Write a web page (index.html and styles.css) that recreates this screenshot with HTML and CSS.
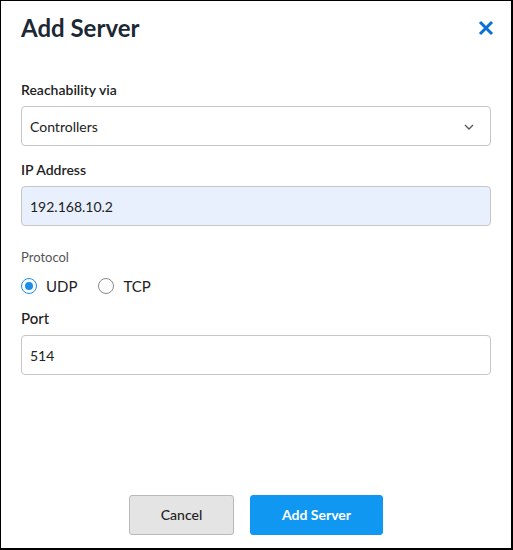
FILE: index.html
```html
<!DOCTYPE html>
<html>
<head>
<meta charset="utf-8">
<link rel="stylesheet" href="styles.css">
</head>
<body>
<div class="dialog">
  <div class="header">
    <h1 class="title">Add Server</h1>
    <button class="close" aria-label="Close">
      <svg width="16" height="16" viewBox="0 0 16 16"><path d="M2 2 L14 14 M14 2 L2 14" stroke="#0a70d6" stroke-width="3" stroke-linecap="butt" fill="none"/></svg>
    </button>
  </div>
  <div class="body">
    <div class="label label-reach">Reachability via</div>
    <div class="field select">
      <span>Controllers</span>
      <svg class="chev" width="10" height="6" viewBox="0 0 10 6"><path d="M1 1 L5 5 L9 1" stroke="#555" stroke-width="1.3" fill="none"/></svg>
    </div>
    <div class="label label-ip">IP Address</div>
    <div class="field filled">192.168.10.2</div>
    <div class="sublabel">Protocol</div>
    <div class="radios">
      <label class="radio"><span class="dot checked"></span>UDP</label>
      <label class="radio"><span class="dot"></span>TCP</label>
    </div>
    <div class="label-port">Port</div>
    <div class="field">514</div>
  </div>
  <div class="footer">
    <button class="btn btn-cancel">Cancel</button>
    <button class="btn btn-primary">Add Server</button>
  </div>
</div>
</body>
</html>
```
FILE: styles.css
```css
* { box-sizing: border-box; }
html, body { margin: 0; padding: 0; }
body {
  font-family: Lato, "Open Sans", "Liberation Sans", sans-serif;
  color: #222;
  background: #fff;
}
.dialog {
  width: 513px;
  height: 550px;
  border-style: solid;
  border-color: #000;
  border-width: 1px 2px 2px 1px;
  display: flex;
  flex-direction: column;
  padding: 0 20px 0 20px;
}
.header {
  display: flex;
  justify-content: space-between;
  align-items: center;
  padding-top: 12px;
  height: 42px;
}
.title {
  margin: 0;
  font-size: 24px;
  line-height: 30px;
  font-weight: 700;
  color: #1c2833;
}
.close {
  border: 0;
  background: none;
  padding: 0;
  width: 16px;
  height: 16px;
  margin-right: -3px;
  display: flex;
}
.body {
  display: flex;
  flex-direction: column;
}
.label {
  font-size: 14px;
  line-height: 20px;
  font-weight: 600;
  color: #222;
}
.label-reach { margin-top: 37px; margin-bottom: 6px; }
.label-ip { margin-top: 14px; margin-bottom: 6px; }
.field {
  height: 40px;
  border: 1px solid #c6c6c6;
  border-radius: 4px;
  padding: 0 8px;
  display: flex;
  align-items: center;
  font-size: 14px;
  color: #222;
}
.select { justify-content: space-between; }
.chev { margin-right: 8px; margin-top: 1px; }
.filled { background: #e8f0fe; }
.sublabel {
  margin-top: 23px;
  font-size: 13px;
  line-height: 16px;
  color: #555;
}
.radios {
  display: flex;
  gap: 21px;
  margin-top: 11px;
  height: 20px;
  align-items: center;
}
.radio {
  display: flex;
  align-items: center;
  gap: 9px;
  font-size: 15px;
  line-height: 20px;
  color: #222;
}
.dot {
  width: 16px;
  height: 16px;
  border-radius: 50%;
  border: 1px solid #8a8a8a;
  display: inline-block;
  position: relative;
}
.dot.checked {
  border: 1.5px solid #1a8fea;
}
.dot.checked::after {
  content: "";
  position: absolute;
  left: 50%;
  top: 50%;
  width: 8px;
  height: 8px;
  margin: -4px 0 0 -4px;
  border-radius: 50%;
  background: #1a8fea;
}
.label-port {
  margin-top: 12px;
  margin-bottom: 7px;
  font-size: 15px;
  line-height: 20px;
  font-weight: 500;
  color: #222;
}
.footer {
  margin-top: auto;
  display: flex;
  justify-content: center;
  gap: 16px;
  padding-bottom: 13px;
}
.btn {
  height: 40px;
  border-radius: 3px;
  font-family: Lato, "Open Sans", "Liberation Sans", sans-serif;
  font-size: 14px;
  line-height: 20px;
  padding: 0 0 1px 0;
  cursor: pointer;
}
.btn-cancel {
  width: 105px;
  background: #e4e4e4;
  border: 1px solid #b9b9b9;
  color: #222;
  font-weight: 500;
}
.btn-primary {
  width: 133px;
  background: #0f97f2;
  border: 1px solid #0f97f2;
  color: #fff;
  font-weight: 700;
}
```
